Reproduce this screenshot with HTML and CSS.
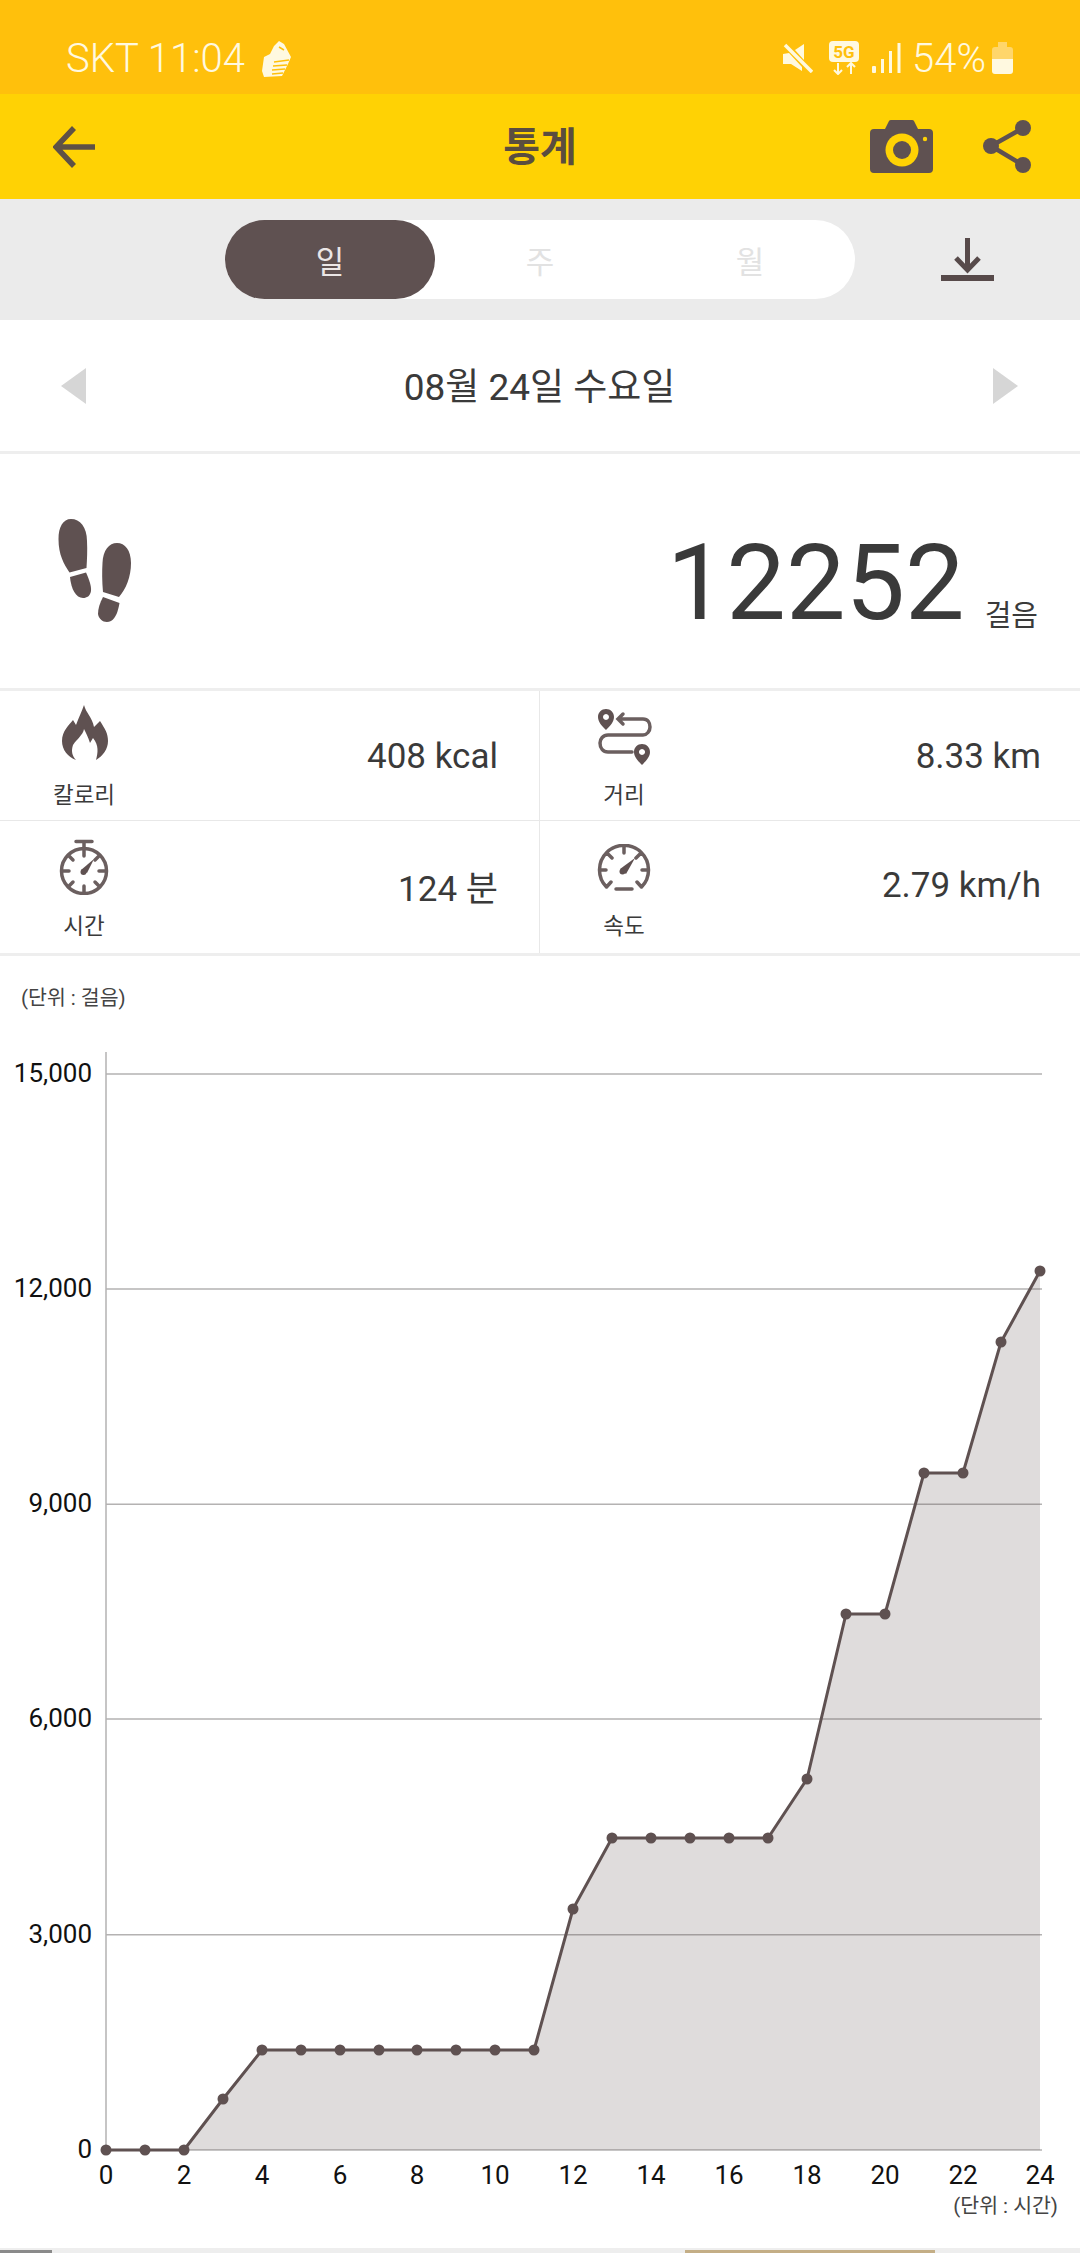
FILE: index.html
```html
<!DOCTYPE html>
<html lang="ko">
<head>
    <meta charset="UTF-8">
    <meta name="viewport" content="width=device-width, initial-scale=1.0">
    <title>통계</title>
    <link rel="stylesheet" href="styles.css">
</head>
<body>
    <div class="status-bar">
        <span>SKT 11:04</span>
        <svg class="ic-shoe" viewBox="0 0 30 36">
            <path class="white" d="M17 0 L22 3 L29 16 L26 23 L20 35 L2 36 L0 30 L2 16 L8 13 L12 5Z"/>
            <path class="stripe" d="M12 21 L27 19 M11 25 L25 24 M10 29 L23 28 M10 33 L21 32 M17 6 L22 9"/>
        </svg>
        <div class="status-right">
            <svg class="ic-mute" viewBox="0 0 30 30">
                <polygon class="white" points="12,7 21,1 21,17"/>
                <polygon class="white" points="0,11 6,10 19,24 19,28 8,21 0,21"/>
                <path class="slash" d="M2 2 L29 29"/>
            </svg>
            <svg class="ic-5g" viewBox="0 0 30 34">
                <rect class="white" x="0" y="0" width="30" height="21" rx="4"/>
                <text class="txt-5g" x="15" y="17">5G</text>
                <path class="arrow-thin" d="M9 22 V33 M5 29 L9 33 L13 29 M22 33 V22 M18 26 L22 22 L26 26"/>
            </svg>
            <svg class="ic-signal" viewBox="0 0 29 30">
                <rect class="white" x="0" y="23" width="4" height="7" rx="1"/>
                <rect class="white" x="9" y="16" width="3" height="14"/>
                <rect class="white" x="17" y="8" width="3" height="22"/>
                <rect class="white" x="25.5" y="0" width="3" height="30"/>
            </svg>
            <span class="pct">54%</span>
            <svg class="ic-battery" viewBox="0 0 21 32">
                <path class="batt-empty" d="M6 0 H15 V5 H18 Q21 5 21 8 V17 H0 V8 Q0 5 3 5 H6Z"/>
                <path class="white" d="M0 17 H21 V29 Q21 32 18 32 H3 Q0 32 0 29Z"/>
            </svg>
        </div>
    </div>

    <div class="app-bar">
        <svg class="ic-back" viewBox="0 0 42 42">
            <path class="stroke-brown" d="M21 2 L3 21 L21 40 M3 21 H42"/>
        </svg>
        <h1 class="title">통계</h1>
        <div class="app-actions">
            <svg class="ic-camera" viewBox="0 0 63 53">
                <path class="fill-brown" d="M4 9 H15 L19 1 Q19.500 0 21 0 H42 Q43.500 0 44 1 L48 9 H59 Q63 9 63 13 V49 Q63 53 59 53 H4 Q0 53 0 49 V13 Q0 9 4 9Z"/>
                <circle class="fill-yellow" cx="32" cy="30" r="16.500"/>
                <circle class="fill-brown" cx="32" cy="30" r="9"/>
                <circle class="fill-yellow" cx="55" cy="19" r="2.200"/>
            </svg>
            <svg class="ic-share" viewBox="0 0 48 53">
                <path class="share-line" d="M40 8 L8 26 L40 45"/>
                <circle class="fill-brown" cx="40" cy="8" r="8"/>
                <circle class="fill-brown" cx="8" cy="26" r="8"/>
                <circle class="fill-brown" cx="40" cy="45" r="8"/>
            </svg>
        </div>
    </div>

    <div class="tab-band">
        <div class="tabs">
            <div class="tab active">일</div>
            <div class="tab">주</div>
            <div class="tab">월</div>
        </div>
        <svg class="ic-download" viewBox="0 0 53 43">
            <path class="stroke-dark" d="M26.500 0 V32 M15 20 L26.500 32 L38 20"/>
            <rect class="fill-dark" x="0" y="37" width="53" height="6"/>
        </svg>
    </div>

    <div class="date-row">
        <span class="tri tri-left"></span>
        <span class="date-text">08월 24일 수요일</span>
        <span class="tri tri-right"></span>
    </div>

    <div class="steps-row">
        <svg class="ic-feet" viewBox="0 0 73 105">
            <path class="fill-brown" d="M13 0 C22 0 29 8 29 22 C29.500 32 29 40 28.500 49 L11.500 53.500 C6 45 0.500 36 0.500 20 C0.500 8 5 0 13 0Z"/>
            <path class="fill-brown" d="M12 58 L28 53.500 C31 60 33.500 67 33 72 C32 77 29 79 25 79 C18 79 13 70 12 58Z"/>
            <path class="fill-brown" d="M59 24 C67 24 73 31 73 44 C73 58 68 70 61 78 L45 73 C44 62 44 52 44.500 44 C45 31 51 24 59 24Z"/>
            <path class="fill-brown" d="M45 78 L61.500 84 C60 92 58 99 53 102 C47 105 41 101 40 95 C40 89 42 84 45 78Z"/>
        </svg>
        <div class="steps-value">
            <span class="steps-num">12252</span>
            <span class="steps-unit">걸음</span>
        </div>
    </div>

    <div class="stats">
        <div class="stat">
            <div class="stat-side">
                <div class="stat-icon">
                    <svg class="ic-flame" viewBox="0 0 47 55">
                        <path class="fill-brown" d="M23 0 C25 8 31 12 33 22 L39 16 C44 24 47 28 47 36 C47 44 42 51 35 55 C37 48 38 40 32 33 L29 38 C27 32 25 28 23 24 C22 30 16 34 12 40 C10 46 11 51 15 55 C7 52 1 45 1 36 C1 26 8 20 12 15 L15 20 C18 12 21 6 23 0Z"/>
                    </svg>
                </div>
                <div class="stat-label">칼로리</div>
            </div>
            <div class="stat-value">408 kcal</div>
        </div>
        <div class="stat">
            <div class="stat-side">
                <div class="stat-icon">
                    <svg class="ic-route" viewBox="0 0 54 56">
                        <path class="line-icon" d="M20 10 H45 C50 10 52 14 52 18 C52 22 49 26 45 26 H10 C5 26 2 30 2 34 C2 39 5 43 10 43 H34 M25 5 L20 10 L25 15"/>
                        <path class="fill-brown pin" d="M8 0 C12.500 0 16 3.500 16 8 C16 13 12 17 8 21 C4 17 0 13 0 8 C0 3.500 3.500 0 8 0Z M8 5 A3 3 0 1 0 8.010 5Z"/>
                        <path class="fill-brown pin" d="M44 35 C48.500 35 52 38.500 52 43 C52 48 48 52 44 56 C40 52 36 48 36 43 C36 38.500 39.500 35 44 35Z M44 40 A3 3 0 1 0 44.010 40Z"/>
                    </svg>
                </div>
                <div class="stat-label">거리</div>
            </div>
            <div class="stat-value">8.33 km</div>
        </div>
        <div class="stat">
            <div class="stat-side">
                <div class="stat-icon">
                    <svg class="ic-watch" viewBox="0 0 50 56">
                        <circle class="line-icon" cx="25" cy="32" r="22.500"/>
                        <path class="line-icon" d="M17 2.500 H33 M25 2.500 V17 M3 32 H10 M40 32 H47 M25 47 V54 M9.500 16.500 L14 21 M40.500 16.500 L36 21 M9.500 47.500 L14 43 M40.500 47.500 L36 43"/>
                        <path class="fill-brown" d="M22 31 L35 20 L28 34Z"/>
                        <circle class="fill-brown" cx="24.500" cy="33" r="3"/>
                    </svg>
                </div>
                <div class="stat-label">시간</div>
            </div>
            <div class="stat-value">124 분</div>
        </div>
        <div class="stat">
            <div class="stat-side">
                <div class="stat-icon">
                    <svg class="ic-speed" viewBox="0 0 54 47">
                        <path class="line-icon" d="M9.500 43 A24.500 24.500 0 1 1 44.500 43 M27 2 V9 M10 9 L15 14 M44 9 L39 14 M2.500 26 H9 M45 26 H51.500 M9.500 43 L14 38 M44.500 43 L40 38 M19 45 H35"/>
                        <path class="fill-brown" d="M23 25 L38 14 L29 30Z"/>
                        <circle class="fill-brown" cx="25.500" cy="27.500" r="3"/>
                    </svg>
                </div>
                <div class="stat-label">속도</div>
            </div>
            <div class="stat-value">2.79 km/h</div>
        </div>
    </div>

    <!-- viewBox uses page coordinates so the points read the same as the screenshot -->
    <svg class="chart" viewBox="0 956 1080 1292">
        <text class="unit-label" x="21" y="1005">(단위 : 걸음)</text>

        <path class="grid-line" d="M106 1074 H1042 M106 1289 H1042 M106 1504.300 H1042 M106 1719 H1042 M106 1934.700 H1042 M106 2150 H1042 M106 1052 V2150"/>

        <polygon class="area" points="184,2150 223,2099 262,2050 534,2050 573,1909 612,1838 768,1838 807,1779 846,1614 885,1614 924,1473 963,1473 1001,1342 1040,1271 1040,2150"/>
        <polyline class="series" points="106,2150 184,2150 223,2099 262,2050 534,2050 573,1909 612,1838 768,1838 807,1779 846,1614 885,1614 924,1473 963,1473 1001,1342 1040,1271"/>

        <g class="dots">
            <circle cx="106" cy="2150" r="5.500"/><circle cx="145" cy="2150" r="5.500"/><circle cx="184" cy="2150" r="5.500"/>
            <circle cx="223" cy="2099" r="5.500"/><circle cx="262" cy="2050" r="5.500"/><circle cx="301" cy="2050" r="5.500"/>
            <circle cx="340" cy="2050" r="5.500"/><circle cx="379" cy="2050" r="5.500"/><circle cx="417" cy="2050" r="5.500"/>
            <circle cx="456" cy="2050" r="5.500"/><circle cx="495" cy="2050" r="5.500"/><circle cx="534" cy="2050" r="5.500"/>
            <circle cx="573" cy="1909" r="5.500"/><circle cx="612" cy="1838" r="5.500"/><circle cx="651" cy="1838" r="5.500"/>
            <circle cx="690" cy="1838" r="5.500"/><circle cx="729" cy="1838" r="5.500"/><circle cx="768" cy="1838" r="5.500"/>
            <circle cx="807" cy="1779" r="5.500"/><circle cx="846" cy="1614" r="5.500"/><circle cx="885" cy="1614" r="5.500"/>
            <circle cx="924" cy="1473" r="5.500"/><circle cx="963" cy="1473" r="5.500"/><circle cx="1001" cy="1342" r="5.500"/>
            <circle cx="1040" cy="1271" r="5.500"/>
        </g>

        <g class="y-labels">
            <text x="92" y="1082">15,000</text>
            <text x="92" y="1297">12,000</text>
            <text x="92" y="1512">9,000</text>
            <text x="92" y="1727">6,000</text>
            <text x="92" y="1943">3,000</text>
            <text x="92" y="2158">0</text>
        </g>
        <g class="x-labels">
            <text x="106" y="2184">0</text>
            <text x="184" y="2184">2</text>
            <text x="262" y="2184">4</text>
            <text x="340" y="2184">6</text>
            <text x="417" y="2184">8</text>
            <text x="495" y="2184">10</text>
            <text x="573" y="2184">12</text>
            <text x="651" y="2184">14</text>
            <text x="729" y="2184">16</text>
            <text x="807" y="2184">18</text>
            <text x="885" y="2184">20</text>
            <text x="963" y="2184">22</text>
            <text x="1040" y="2184">24</text>
        </g>
        <text class="unit-label unit-end" x="1058" y="2213">(단위 : 시간)</text>
    </svg>

    <div class="bottom-strip">
        <div class="strip-gray"></div>
        <div class="strip-tan"></div>
    </div>
</body>
</html>
```

FILE: styles.css
```css
body {
    margin: 0;
    width: 1080px;
    height: 2253px;
    overflow: hidden;
    background-color: #fff;
    font-family: Roboto, "Noto Sans CJK KR", sans-serif;
    color: #3a3a3a;
}

svg {
    display: block;
    flex: none;
}

/* shared icon paints */
.white { fill: #fff9e0; }
.fill-brown { fill: #5f5151; }
.fill-yellow { fill: #ffd204; }
.fill-dark { fill: #574a4a; }
.stroke-brown { fill: none; stroke: #5f5145; stroke-width: 5.500; }
.stroke-dark { fill: none; stroke: #574a4a; stroke-width: 5; }
.line-icon { fill: none; stroke: #6b5f5f; stroke-width: 3.500; stroke-linecap: round; }

/* status bar */
.status-bar {
    display: flex;
    align-items: center;
    height: 94px;
    box-sizing: border-box;
    padding: 22px 67px 0 66px;
    background-color: #ffc00c;
    color: #fff9e0;
    font-size: 40px;
    font-weight: 300;
}

.ic-shoe { width: 30px; height: 36px; margin-left: 17px; margin-top: 2px; }
.stripe { fill: none; stroke: #ffc00c; stroke-width: 1.500; }

.status-right {
    display: flex;
    align-items: center;
    margin-left: auto;
}

.ic-mute { width: 30px; height: 30px; }
.slash { fill: none; stroke: #fff9e0; stroke-width: 3.500; }
.ic-5g { width: 30px; height: 34px; margin-left: 16px; }
.txt-5g { font-size: 17px; font-weight: 700; fill: #ffc00c; text-anchor: middle; }
.arrow-thin { fill: none; stroke: #fff9e0; stroke-width: 2; }
.ic-signal { width: 29px; height: 30px; margin-left: 13px; }
.pct { margin-left: 11px; }
.ic-battery { width: 21px; height: 32px; margin-left: 6px; }
.batt-empty { fill: #ffd66b; }

/* app bar */
.app-bar {
    display: grid;
    grid-template-columns: 1fr auto 1fr;
    align-items: center;
    height: 105px;
    padding: 0 49px 0 53px;
    background-color: #ffd204;
}

.ic-back { width: 42px; height: 42px; }

.title {
    margin: 0 4px 0 0;
    padding-bottom: 5px;
    font-size: 40px;
    font-weight: 700;
    color: #5a4d3f;
}

.app-actions {
    display: flex;
    align-items: center;
    justify-content: flex-end;
    gap: 50px;
}

.ic-camera { width: 63px; height: 53px; }
.ic-share { width: 48px; height: 53px; }
.share-line { fill: none; stroke: #5f5151; stroke-width: 4.500; }

/* day / week / month */
.tab-band {
    display: flex;
    align-items: center;
    height: 121px;
    padding-left: 225px;
    background-color: #ebebeb;
}

.tabs {
    display: flex;
    width: 630px;
    height: 79px;
    background-color: #fff;
    border-radius: 40px;
}

.tab {
    width: 210px;
    display: flex;
    align-items: center;
    justify-content: center;
    font-size: 31px;
    color: #e2e2e2;
    border-radius: 40px;
}

.tab.active {
    background-color: #5f5151;
    color: #ebe6e6;
}

.ic-download { width: 53px; height: 43px; margin-left: 86px; }

/* date row */
.date-row {
    display: flex;
    align-items: center;
    justify-content: space-between;
    height: 131px;
    padding: 0 62px 0 61px;
    border-bottom: 3px solid #eeeeee;
}

.tri {
    width: 0;
    height: 0;
    border-top: 18px solid transparent;
    border-bottom: 18px solid transparent;
}

.tri-left { border-right: 25px solid #d6d6d6; }
.tri-right { border-left: 25px solid #d6d6d6; }

.date-text { font-size: 37px; padding-bottom: 4px; }

/* step count */
.steps-row {
    display: flex;
    align-items: center;
    justify-content: space-between;
    height: 234px;
    padding: 0 42px 0 58px;
    border-bottom: 3px solid #eeeeee;
}

.ic-feet { width: 73px; height: 105px; }

.steps-value {
    display: flex;
    align-items: flex-end;
    gap: 20px;
    padding-top: 24px;
}

.steps-num { font-size: 106px; line-height: 120px; }
.steps-unit { font-size: 29px; line-height: 36px; padding-bottom: 9px; }

/* four stat cells */
.stats {
    display: grid;
    grid-template-columns: 540px 540px;
    grid-template-rows: 130px 132px;
    border-bottom: 3px solid #eeeeee;
}

.stat {
    display: flex;
    align-items: center;
    justify-content: space-between;
    padding-right: 41px;
    box-sizing: border-box;
}

.stat:nth-child(odd) { border-right: 1px solid #e8e8e8; }
.stat:nth-child(even) { padding-right: 39px; }
.stat:nth-child(-n+2) { border-bottom: 1px solid #e8e8e8; }

.stat-side {
    display: flex;
    flex-direction: column;
    align-items: center;
    width: 168px;
    height: 100%;
    padding-bottom: 14px;
    box-sizing: border-box;
}

.stat:nth-child(-n+2) .stat-side { padding-bottom: 12px; }

.stat-icon {
    flex: 1;
    display: flex;
    align-items: center;
    justify-content: center;
}

.ic-flame { width: 47px; height: 55px; margin-bottom: 8px; }
.ic-route { width: 54px; height: 56px; margin-left: 2px; }
.ic-watch { width: 50px; height: 56px; }
.ic-speed { width: 54px; height: 47px; }

.stat-label { font-size: 22.500px; line-height: 26px; }
.stat-value { font-size: 35px; padding-bottom: 3px; }
.stat:nth-child(-n+2) .stat-value { padding-bottom: 0; padding-top: 2px; }

/* chart */
.chart {
    width: 1080px;
    height: 1292px;
}

.chart text { font-family: Roboto, "Noto Sans CJK KR", sans-serif; }

.grid-line { fill: none; stroke: #b4b2b2; stroke-width: 1.500; }
.area { fill: #5f5151; fill-opacity: 0.2; }
.series { fill: none; stroke: #5f5151; stroke-width: 3; }
.dots { fill: #5f5151; }

.y-labels, .x-labels { font-size: 26px; fill: #111; }
.y-labels { text-anchor: end; }
.x-labels { text-anchor: middle; }

.unit-label { font-size: 20.500px; fill: #444; }
.unit-end { text-anchor: end; }

/* clipped row under the chart */
.bottom-strip {
    display: flex;
    height: 5px;
    background-color: #eeeeee;
    padding-top: 2px;
}

.strip-gray { width: 52px; background-color: #8a8a8a; }
.strip-tan { width: 250px; margin-left: 633px; background-color: #c4ae86; }
```
